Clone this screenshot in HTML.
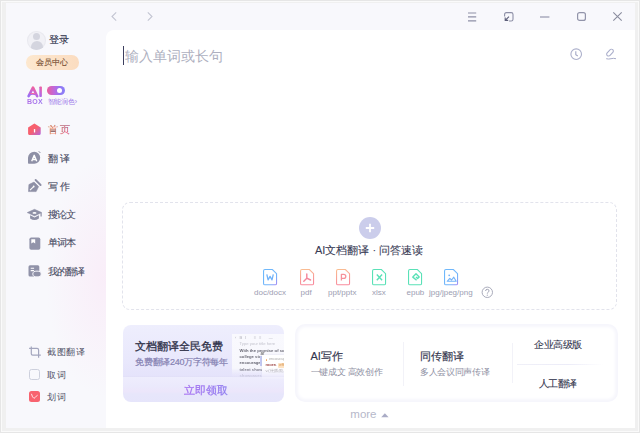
<!DOCTYPE html>
<html><head><meta charset="utf-8">
<style>
*{margin:0;padding:0;box-sizing:border-box}
html,body{width:640px;height:433px;overflow:hidden;background:#e6e6e6;font-family:"Liberation Sans",sans-serif}
.a{position:absolute}
.t{position:absolute;white-space:nowrap;line-height:1}
svg{position:absolute;overflow:visible}
#f1{left:1px;top:1px;width:638px;height:431px;background:#fafafa}
#f2{left:2px;top:2px;width:636px;height:429px;background:#f0f0f0}
#win{left:6px;top:3px;width:629px;height:425px;background:#f8f8fc;overflow:hidden}
#glow{left:6px;top:3px;width:100px;height:425px;background:radial-gradient(ellipse 60px 120px at 100px 275px,rgba(250,230,246,.6),rgba(248,248,252,0))}
#panel{left:106px;top:30px;width:529px;height:398px;background:#fff;border-top-left-radius:8px}
.nav{color:#474962;font-size:10px;letter-spacing:-0.8px;-webkit-text-stroke:0.1px #474962}
.lbl{font-size:8px;color:#9c9eb2}
</style></head><body>
<div class="a" id="f1"></div>
<div class="a" id="f2"></div>
<div class="a" id="win"></div>
<div class="a" id="glow"></div>

<!-- avatar -->
<div class="a" style="left:27.3px;top:30.7px;width:19px;height:19px;border-radius:50%;background:#f1f1f6;box-shadow:inset 0 0 0 1px #e9e9ef;overflow:hidden">
  <div class="a" style="left:6.1px;top:2.6px;width:7px;height:7px;border-radius:50%;background:#d4d5df"></div>
  <div class="a" style="left:3.3px;top:9.9px;width:12.4px;height:10px;border-radius:50% 50% 45% 45%/65% 65% 35% 35%;background:#d4d5df"></div>
</div>
<div class="t" style="left:49px;top:35.3px;font-size:10px;color:#2b2e48;-webkit-text-stroke:0.1px #2b2e48">登录</div>
<div class="a" style="left:26px;top:55px;width:52.5px;height:14.5px;border-radius:7.25px;background:linear-gradient(90deg,#fde8cf,#fbdcc0)"></div>
<div class="t" style="left:35.5px;top:59px;font-size:8px;color:#7e563a;-webkit-text-stroke:0.15px #7e563a">会员中心</div>

<!-- AI box -->
<svg style="left:27px;top:85.5px" width="16" height="12" viewBox="0 0 16 12">
  <defs><linearGradient id="aig" x1="0.7" y1="0" x2="0.2" y2="1"><stop offset="0" stop-color="#f2609c"/><stop offset="0.55" stop-color="#c466d8"/><stop offset="1" stop-color="#9b6ef2"/></linearGradient></defs>
  <path d="M1.6 10.2 L6 1.6 L10.2 10.2" stroke="url(#aig)" stroke-width="2.6" fill="none" stroke-linejoin="round" stroke-linecap="round"/>
  <path d="M2.6 8.6 Q5.6 7.4 8.6 8.4" stroke="url(#aig)" stroke-width="1.8" fill="none"/>
  <rect x="12.3" y="0.4" width="2.6" height="10.6" rx="0.8" fill="url(#aig)"/>
</svg>
<div class="a" style="left:47px;top:86px;width:18px;height:9px;border-radius:4.5px;background:linear-gradient(90deg,#ea5e9c,#c068dc 40%,#9478f4 70%,#8a7ef7)"></div>
<div class="a" style="left:57px;top:87.8px;width:5.3px;height:5.3px;border-radius:50%;background:#fff"></div>
<div class="t" style="left:27px;top:98.3px;font-size:7px;font-weight:bold;background:linear-gradient(90deg,#b070e6,#9a72ee);-webkit-background-clip:text;color:transparent;letter-spacing:0.3px;">BOX</div>
<div class="t" style="left:47.5px;top:97.8px;font-size:7px;letter-spacing:-0.2px;color:#a07aea">智能润色›</div>

<!-- nav -->
<svg style="left:28px;top:123px" width="13" height="13" viewBox="0 0 13 13">
  <defs><linearGradient id="hg" x1="0" y1="0" x2="1" y2="1"><stop offset="0.5" stop-color="#f7606e"/><stop offset="1" stop-color="#b468e0"/></linearGradient></defs>
  <path d="M5.6 0.9 Q6.4 0.3 7.2 0.9 L12.7 4.4 V10.8 Q12.7 11.9 11.6 11.9 H1.2 Q0.1 11.9 0.1 10.8 V4.4 Z" fill="url(#hg)"/>
  <rect x="5.9" y="6" width="1.3" height="3.4" rx="0.5" fill="#fff"/>
</svg>
<div class="t nav" style="left:47.5px;top:124.5px;letter-spacing:2.1px;background:linear-gradient(90deg,#f39156,#f0609c);-webkit-background-clip:text;color:transparent">首页</div>

<svg style="left:27px;top:151px" width="15" height="15" viewBox="0 0 15 15">
  <path d="M7.2 0.8 A6 6 0 1 1 7.2 12.8 H1.8 Q1 12.8 1 12 V6.8 A6.2 6.2 0 0 1 7.2 0.8 Z" fill="#8e90a6"/>
  <path d="M4.7 10.2 L7.2 4.3 L9.7 10.2 M5.6 8.5 H8.8" stroke="#fff" stroke-width="1.4" fill="none" stroke-linejoin="round"/>
  <path d="M11.7 0.2 L13.4 2" stroke="#8e90a6" stroke-width="1"/>
</svg>
<div class="t nav" style="left:47.5px;top:153.5px;letter-spacing:2.1px">翻译</div>

<svg style="left:28px;top:179px" width="14" height="14" viewBox="0 0 14 14">
  <path d="M0.5 12.6 L0.9 5.6 L6 3.1 L10.6 7.6 L8.1 12.6 Z" fill="#8e90a6" stroke="#8e90a6" stroke-width="0.6" stroke-linejoin="round"/>
  <path d="M2 11.2 L5.4 7.8" stroke="#fff" stroke-width="1.1"/>
  <circle cx="5.7" cy="7.5" r="0.9" fill="#fff"/>
  <path d="M7.6 1 L12.6 6" stroke="#8e90a6" stroke-width="1.9" stroke-linecap="round"/>
</svg>
<div class="t nav" style="left:47.5px;top:181.5px;letter-spacing:2.1px">写作</div>

<svg style="left:27px;top:209px" width="15" height="12" viewBox="0 0 15 12">
  <path d="M7.5 0.3 L14.8 3.6 L7.5 6.9 L0.2 3.6 Z" fill="#8e90a6" stroke="#8e90a6" stroke-width="0.5" stroke-linejoin="round"/>
  <path d="M3.1 6.3 V9.5 Q7.5 12.6 11.9 9.5 V6.3 L7.5 8.4 Z" fill="#8e90a6"/>
  <path d="M14.1 4 V7.6" stroke="#8e90a6" stroke-width="1.2"/>
  <ellipse cx="7.5" cy="3.9" rx="2" ry="0.9" fill="#fff"/>
</svg>
<div class="t nav" style="left:47.5px;top:209.8px">搜论文</div>

<svg style="left:28.5px;top:236.5px" width="12" height="13" viewBox="0 0 12 13">
  <rect x="0.4" y="0.4" width="10.9" height="12.3" rx="1.8" fill="#9294aa"/>
  <path d="M2.3 2.3 H6.2 V6.6 L4.25 5.3 L2.3 6.6 Z" fill="#fff"/>
</svg>
<div class="t nav" style="left:47.5px;top:238.3px">单词本</div>

<svg style="left:28px;top:265px" width="14" height="13" viewBox="0 0 14 13">
  <rect x="0.5" y="0.2" width="10.8" height="11.3" rx="1.5" fill="#9092a8"/>
  <path d="M2.7 3.2 H6.1 M2.7 5.6 H6.1" stroke="#fff" stroke-width="1.1"/>
  <ellipse cx="9" cy="9" rx="4.2" ry="2.9" fill="#9092a8" stroke="#f8f7fc" stroke-width="1"/>
</svg>
<div class="t nav" style="left:47.5px;top:266.8px">我的翻译</div>

<!-- bottom tools -->
<svg style="left:29px;top:346px" width="12" height="12" viewBox="0 0 12 12">
  <path d="M2.3 0.4 V7.8 Q2.3 9.2 3.7 9.2 H11.8 M0.1 2.3 H8 Q9.6 2.3 9.6 3.9 V11.8" stroke="#a3a6be" stroke-width="1.2" fill="none"/>
</svg>
<div class="t" style="left:47px;top:348px;font-size:9px;letter-spacing:0.5px;color:#4f5166">截图翻译</div>
<div class="a" style="left:29px;top:369px;width:11px;height:11px;border:1.3px solid #cdd0dd;border-radius:2.5px"></div>
<div class="t" style="left:47px;top:371px;font-size:9px;letter-spacing:0.5px;color:#4f5166">取词</div>
<div class="a" style="left:29px;top:391px;width:11px;height:11px;border-radius:2.5px;background:#f8636f"></div>
<svg style="left:29px;top:391px" width="11" height="11" viewBox="0 0 11 11"><path d="M2.4 2.8 Q3.4 6.6 5 7.4 Q6.4 6 8.6 4.2" stroke="#ffe2e4" stroke-width="1" fill="none"/></svg>
<div class="t" style="left:47px;top:393px;font-size:9px;letter-spacing:0.5px;color:#4f5166">划词</div>

<!-- top bar -->
<svg style="left:111px;top:12px" width="6" height="9" viewBox="0 0 6 9"><path d="M5.2 0.4 L1 4.5 L5.2 8.6" stroke="#c3c5d2" stroke-width="1.1" fill="none"/></svg>
<svg style="left:147px;top:12px" width="6" height="9" viewBox="0 0 6 9"><path d="M0.8 0.4 L5 4.5 L0.8 8.6" stroke="#c3c5d2" stroke-width="1.1" fill="none"/></svg>

<svg style="left:468px;top:12px" width="9" height="10" viewBox="0 0 9 10"><path d="M0 1 H8.2 M0 4.9 H8.2 M0 8.9 H8.2" stroke="#8d8fa6" stroke-width="1.1"/></svg>
<svg style="left:504px;top:11.5px" width="10" height="10" viewBox="0 0 10 10">
  <path d="M0.6 4.5 V2.4 Q0.6 0.6 2.4 0.6 H7.2 Q9 0.6 9 2.4 V7.2 Q9 9 7.2 9 H5" stroke="#8d8fa6" stroke-width="1.1" fill="none"/>
  <path d="M5 4.6 L1.2 8.4 M1.2 5.4 V8.4 H4.2" stroke="#5d5f7a" stroke-width="1.1" fill="none"/>
</svg>
<svg style="left:540px;top:15.5px" width="10" height="2" viewBox="0 0 10 2"><path d="M0 1 H9.4" stroke="#8d8fa6" stroke-width="1.1"/></svg>
<svg style="left:577px;top:12px" width="9" height="9" viewBox="0 0 9 9"><rect x="0.6" y="0.6" width="7.8" height="7.8" rx="2" stroke="#9294aa" stroke-width="1.2" fill="none"/></svg>
<svg style="left:613px;top:12px" width="9" height="9" viewBox="0 0 9 9"><path d="M0.3 0.3 L8.7 8.7 M8.7 0.3 L0.3 8.7" stroke="#8a8c9e" stroke-width="1.1"/></svg>

<!-- main panel -->
<div class="a" id="panel"></div>
<div class="a" style="left:122.5px;top:46px;width:1.8px;height:18.5px;background:#3c3e5e"></div>
<div class="t" style="left:124.5px;top:48.5px;font-size:14px;color:#aeb0c0">输入单词或长句</div>

<svg style="left:570px;top:48px" width="12" height="12" viewBox="0 0 12 12">
  <circle cx="6.2" cy="6.2" r="5.3" stroke="#acb0cb" stroke-width="1.1" fill="none"/>
  <path d="M5.8 3.2 V6.6 L7.8 8" stroke="#a4a8c6" stroke-width="1.1" fill="none"/>
</svg>
<svg style="left:600px;top:44px" width="20" height="20" viewBox="0 0 20 20">
  <rect x="-4" y="-1.95" width="8" height="3.9" rx="1.95" transform="translate(10 8.6) rotate(-47)" stroke="#a9adca" stroke-width="1.05" fill="none"/>
  <path d="M6.2 14.7 Q8.6 15.4 11 14.7 Q13.4 14 16 14.7" stroke="#a9adca" stroke-width="1" fill="none"/>
</svg>

<!-- upload dashed box -->
<div class="a" style="left:122px;top:202px;width:495px;height:108px;border:1px dashed #e2e3ec;border-radius:8px"></div>
<div class="a" style="left:359px;top:217px;width:22px;height:22px;border-radius:50%;background:#cbcdeb"></div>
<svg style="left:359px;top:217px" width="22" height="22" viewBox="0 0 22 22"><path d="M11 6.8 V15.2 M6.8 11 H15.2" stroke="#fff" stroke-width="1.8"/></svg>
<div class="t" style="left:315px;top:245px;font-size:11px;color:#393b55;-webkit-text-stroke:0.1px #393b55">AI文档翻译 · 问答速读</div>

<!-- file icons -->
<svg style="position:absolute;width:0;height:0"><defs>
<linearGradient id="gb" x1="0" y1="0" x2="1" y2="1"><stop offset="0" stop-color="#56adfb"/><stop offset="0.7" stop-color="#5aa8fa"/><stop offset="1" stop-color="#9479f2"/></linearGradient>
<linearGradient id="gp" x1="0" y1="0" x2="0.2" y2="1"><stop offset="0" stop-color="#f9b47e"/><stop offset="1" stop-color="#f7788c"/></linearGradient>
</defs></svg>
<svg style="left:263.1px;top:268.5px;opacity:.85" width="15" height="17" viewBox="0 0 15 17"><path d="M1.9 0.55 H9.4 L13.55 4.7 V14.4 Q13.55 15.8 12.15 15.8 H1.9 Q0.55 15.8 0.55 14.4 V1.95 Q0.55 0.55 1.9 0.55 Z" stroke="url(#gb)" stroke-width="1.1" fill="none"/><path d="M3.8 5.4 L5.1 10.9 L7.05 7.4 L9 10.9 L10.3 5.4" stroke="#5aa6f8" stroke-width="1.3" fill="none" stroke-linejoin="round"/></svg>
<svg style="left:299.5px;top:268.5px;opacity:.85" width="15" height="17" viewBox="0 0 15 17"><path d="M1.9 0.55 H9.4 L13.55 4.7 V14.4 Q13.55 15.8 12.15 15.8 H1.9 Q0.55 15.8 0.55 14.4 V1.95 Q0.55 0.55 1.9 0.55 Z" stroke="url(#gp)" stroke-width="1.1" fill="none"/><path d="M6.8 5 V9.2 M6.8 9.2 L3.8 12.2 M6.8 9.2 L10.6 11" stroke="#f27189" stroke-width="1.4" fill="none" stroke-linecap="round"/></svg>
<svg style="left:335.5px;top:268.5px;opacity:.85" width="15" height="17" viewBox="0 0 15 17"><path d="M1.9 0.55 H9.4 L13.55 4.7 V14.4 Q13.55 15.8 12.15 15.8 H1.9 Q0.55 15.8 0.55 14.4 V1.95 Q0.55 0.55 1.9 0.55 Z" stroke="url(#gp)" stroke-width="1.1" fill="none"/><path d="M5.4 11.4 V5.3 H7.6 Q9.8 5.3 9.8 7.4 Q9.8 9.3 7.6 9.3 H5.6" stroke="#f5808a" stroke-width="1.3" fill="none" stroke-linejoin="round"/></svg>
<svg style="left:371.5px;top:268.5px;opacity:.85" width="15" height="17" viewBox="0 0 15 17"><path d="M1.9 0.55 H9.4 L13.55 4.7 V14.4 Q13.55 15.8 12.15 15.8 H1.9 Q0.55 15.8 0.55 14.4 V1.95 Q0.55 0.55 1.9 0.55 Z" stroke="#3edcab" stroke-width="1.1" fill="none"/><path d="M4.8 5.6 L10.1 11.3 M10.1 5.6 L4.8 11.3" stroke="#3edcab" stroke-width="1.4" fill="none"/></svg>
<svg style="left:407.5px;top:268.5px;opacity:.85" width="15" height="17" viewBox="0 0 15 17"><path d="M1.9 0.55 H9.4 L13.55 4.7 V14.4 Q13.55 15.8 12.15 15.8 H1.9 Q0.55 15.8 0.55 14.4 V1.95 Q0.55 0.55 1.9 0.55 Z" stroke="#3edcab" stroke-width="1.1" fill="none"/><path d="M8.6 11.2 L4.8 8.1 L8 4.8 L11.2 8 L9.6 9.6 L8 8" stroke="#3edcab" stroke-width="1.4" fill="none" stroke-linejoin="round"/></svg>
<svg style="left:443.8px;top:268.5px;opacity:.85" width="15" height="17" viewBox="0 0 15 17"><path d="M1.9 0.55 H9.4 L13.55 4.7 V14.4 Q13.55 15.8 12.15 15.8 H1.9 Q0.55 15.8 0.55 14.4 V1.95 Q0.55 0.55 1.9 0.55 Z" stroke="url(#gb)" stroke-width="1.1" fill="none"/><circle cx="5.2" cy="6.3" r="0.9" fill="#5aa6f8"/><path d="M3.2 12.3 L5.8 9.4 L7.6 11 L9.8 8.2 L12.2 12.3 Z" stroke="#5aa6f8" stroke-width="1.1" fill="none" stroke-linejoin="round"/></svg>
<div class="t lbl" style="left:254px;top:289px">doc/docx</div>
<div class="t lbl" style="left:300.5px;top:289px">pdf</div>
<div class="t lbl" style="left:328px;top:289px">ppt/pptx</div>
<div class="t lbl" style="left:372px;top:289px">xlsx</div>
<div class="t lbl" style="left:406.5px;top:289px">epub</div>
<div class="t lbl" style="left:429px;top:289px">jpg/jpeg/png</div>
<svg style="left:481px;top:285.5px" width="13" height="13" viewBox="0 0 13 13">
  <circle cx="6.3" cy="6.3" r="5.2" stroke="#a9abbb" stroke-width="1" fill="none"/>
  <path d="M4.6 5 Q4.6 3.3 6.3 3.3 Q8 3.3 8 4.9 Q8 5.8 7 6.3 Q6.3 6.7 6.3 7.6" stroke="#a3a5b6" stroke-width="1" fill="none"/>
  <circle cx="6.3" cy="9.2" r="0.6" fill="#a3a5b6"/>
</svg>

<!-- promo card -->
<div class="a" style="left:123px;top:325px;width:161px;height:76.5px;border-radius:8px;overflow:hidden;background:linear-gradient(180deg,#eeeefd 0%,#e9e8fc 45%,#e5e3fb 66%,#e2e0f8 67%,#eeedfd 68%,#ebe9fc 80%,#ece6fb 86%,#e7e6fb 90%,#e6e5fb 100%)">
  <!-- mockup -->
  <div class="a" style="left:109px;top:9px;width:60px;height:46px;background:linear-gradient(180deg,#f9f9fe 0%,#f7f7fc 75%,rgba(244,242,252,0) 100%);box-shadow:-1px 0 2px rgba(200,200,230,.35);-webkit-mask-image:linear-gradient(180deg,#000 72%,rgba(0,0,0,0) 100%);filter:blur(0.25px)">
    <div class="t" style="left:3px;top:2px;font-size:4px;color:#b0b0ba;letter-spacing:1px">&#8249; B I &nbsp; &#8801; &#8801; &nbsp; &#8212;</div>
    <div class="t" style="left:7.5px;top:8.3px;font-size:4.2px;color:#c4c4ce">Type your title here</div>
    <div class="t" style="left:7.5px;top:14.6px;font-size:4.2px;font-weight:bold;color:#6a6a76">With the promise of society,</div>
    <div class="t" style="left:7.5px;top:20.9px;font-size:4.2px;font-weight:bold;color:#6a6a76">college stude</div>
    <div class="t" style="left:7.5px;top:27.3px;font-size:4.2px;font-weight:bold;color:#6a6a76">encouraged</div>
    <div class="t" style="left:7.5px;top:34px;font-size:4.2px;font-weight:bold;color:#6a6a76">talent shows, W</div>
    <div class="t" style="left:7.5px;top:40.3px;font-size:4.2px;font-weight:bold;color:#9a9aa6">showcases fre</div>
    <div class="a" style="left:28px;top:22px;width:1.8px;height:10px;background:#c3c9f2"></div>
    <div class="t" style="left:28.5px;top:17.6px;font-size:4.5px;color:#555">ar</div>
    <div class="a" style="left:30px;top:21px;width:32px;height:24px;background:#fff;box-shadow:0 0 2px rgba(160,160,200,.3)">
      <div class="a" style="left:3.5px;top:4px;width:1.5px;height:1.5px;border-radius:50%;background:#f4a35e"></div>
      <div class="t" style="left:7px;top:2.6px;font-size:3.8px;color:#aaa">encourage</div>
      <div class="t" style="left:3.5px;top:8.4px;font-size:4.2px;font-weight:bold;color:#a04848">more</div>
      <div class="t" style="left:12.5px;top:8.4px;font-size:4px;color:#b08080">+</div>
      <div class="a" style="left:16px;top:7.5px;width:12px;height:5.5px;border-radius:1px;background:#fde2c2"></div>
      <div class="t" style="left:17.2px;top:8.2px;font-size:4px;color:#d4904a">effe</div>
      <div class="t" style="left:3.5px;top:14.2px;font-size:4px;color:#999">v.(使)鼓励, 使</div>
    </div>
  </div>
</div>
<div class="t" style="left:135px;top:340.5px;font-size:11px;color:#2f3149;-webkit-text-stroke:0.3px #2f3149">文档翻译全民免费</div>
<div class="t" style="left:135.3px;top:357.8px;font-size:9px;letter-spacing:-0.3px;color:#8581b2;-webkit-text-stroke:0.2px #8581b2">免费翻译240万字符每年</div>
<div class="t" style="left:183.5px;top:385px;font-size:11px;background:linear-gradient(90deg,#a66cf2,#8a7ff0);-webkit-background-clip:text;color:transparent;-webkit-text-stroke:0.2px rgba(160,110,240,.5)">立即领取</div>

<!-- feature card -->
<div class="a" style="left:295px;top:324px;width:323px;height:78px;border-radius:10px;background:#fff;box-shadow:inset 0 0 3px 3px #f6f6fc"></div>
<div class="t" style="left:310.5px;top:350.5px;font-size:11px;color:#33354d;-webkit-text-stroke:0.15px #33354d">AI写作</div>
<div class="t" style="left:310.5px;top:367.5px;font-size:9px;letter-spacing:-0.3px;color:#8f91a4">一键成文 高效创作</div>
<div class="a" style="left:403px;top:342px;width:1px;height:44px;background:#f2f2f8"></div>
<div class="t" style="left:420px;top:350.5px;font-size:11px;color:#33354d;-webkit-text-stroke:0.15px #33354d">同传翻译</div>
<div class="t" style="left:420px;top:367.5px;font-size:9px;letter-spacing:-0.33px;color:#8f91a4">多人会议同声传译</div>
<div class="a" style="left:511.5px;top:343px;width:1px;height:40px;background:#f2f2f8"></div>
<div class="a" style="left:517px;top:363.5px;width:86px;height:1px;background:linear-gradient(90deg,#f0f0f8,#ececf8 60%,rgba(240,240,250,0))"></div>
<div class="t" style="left:534px;top:340px;font-size:10px;letter-spacing:-0.45px;color:#35374f;-webkit-text-stroke:0.12px #35374f">企业高级版</div>
<div class="t" style="left:538.5px;top:379px;font-size:10px;letter-spacing:-0.5px;color:#35374f;-webkit-text-stroke:0.12px #35374f">人工翻译</div>

<div class="t" style="left:350.3px;top:409px;font-size:11.5px;color:#b6b8ca">more</div>
<svg style="left:381px;top:413.3px" width="8" height="5" viewBox="0 0 8 5"><path d="M0.2 4.3 L3.9 0.2 L7.6 4.3 Z" fill="#aaacc6"/></svg>
</body></html>
